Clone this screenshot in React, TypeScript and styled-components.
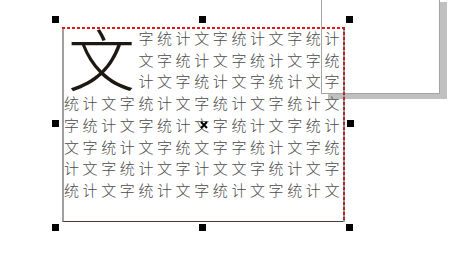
import styled, { createGlobalStyle } from 'styled-components';

const GlobalStyle = createGlobalStyle`
	html, body {
		margin: 0;
		padding: 0;
		background: #ffffff;
		overflow: hidden;
	}
`;

const rows = [
	'字统计文字统计文字统计',
	'文字统计文字统计文字统',
	'计文字统计文字统计文字',
	'统计文字统计文字统计文字统计文',
	'字统计文字统计文字统计文字统计',
	'文字统计文字统文字字统计文字统',
	'计文字统计文字计文文字统计文字',
	'统计文字统计文字统计文字统计文',
];

// selection handles round the text frame: [x, y]
const handles: [number, number][] = [
	[52, 16],
	[199, 16],
	[346, 16],
	[52, 120],
	[347, 120],
	[52, 224],
	[199, 224],
	[346, 224],
];

const App = () => {
	return (
		<Canvas>
			<GlobalStyle />
			<Window />
			<TextFrame>
				<DropCap>文</DropCap>
				{rows.map((row, i) => (
					<Row key={i}>{row}</Row>
				))}
			</TextFrame>
			{handles.map(([x, y], i) => (
				<Handle key={i} $x={x} $y={y} />
			))}
			<CenterMark viewBox="0 0 8 8" width="8" height="8">
				<path d="M1 1 L7 7 M7 1 L1 7" stroke="#000" strokeWidth="2" />
			</CenterMark>
		</Canvas>
	);
};

const Canvas = styled.div`
	position: relative;
	width: 472px;
	height: 270px;
	overflow: hidden;
	background: #ffffff;
`;

const Window = styled.div`
	position: absolute;
	left: 321px;
	top: -3px;
	width: 117px;
	height: 95px;
	background: #ffffff;
	border: 1px solid #a4a4a4;
	box-shadow: 7px 5px 0 #c0c0c0;
`;

const TextFrame = styled.div`
	position: absolute;
	left: 62px;
	top: 27px;
	width: 279px;
	height: 194px;
	border-left: 2px solid #a0a0a0;
	border-bottom: 1px solid #4e3838;
	font-family: 'Noto Sans CJK SC', sans-serif;
	color: #4a4a4a;

	&::before {
		content: '';
		position: absolute;
		left: -2px;
		right: -2px;
		top: 0;
		height: 2px;
		background: repeating-linear-gradient(90deg, #e01818 0 3px, transparent 3px 5px);
	}

	&::after {
		content: '';
		position: absolute;
		right: -2px;
		top: 0;
		bottom: -1px;
		width: 2px;
		background: repeating-linear-gradient(180deg, #b02828 0 3px, #9a9a9a 3px 5px);
	}
`;

const DropCap = styled.div`
	float: left;
	width: 74.4px;
	height: 65px;
	padding-left: 4px;
	box-sizing: border-box;
	font-size: 67px;
	line-height: 62px;
	font-weight: 300;
	color: #1e1812;
	margin-top: -1px;
	margin-bottom: 0;
`;

const Row = styled.div`
	font-size: 15px;
	line-height: 21.7px;
	letter-spacing: 3.6px;
	font-weight: 300;
	white-space: nowrap;
`;

const Handle = styled.div<{ $x: number; $y: number }>`
	position: absolute;
	left: ${(p) => p.$x}px;
	top: ${(p) => p.$y}px;
	width: 7px;
	height: 7px;
	background: #000000;
`;

const CenterMark = styled.svg`
	position: absolute;
	left: 200px;
	top: 121px;
`;

export default App;
